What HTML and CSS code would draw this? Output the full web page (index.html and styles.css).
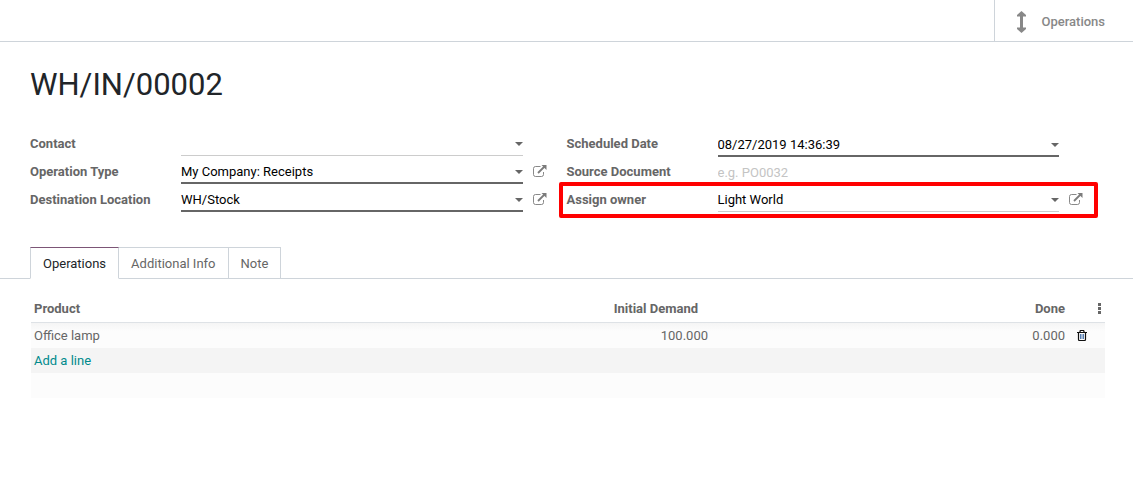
FILE: index.html
```html
<!DOCTYPE html>
<html lang="en">
<head>
<meta charset="utf-8">
<title>WH/IN/00002</title>
<link rel="stylesheet" href="styles.css">
</head>
<body>
<svg class="sprite" aria-hidden="true">
  <symbol id="external" viewBox="0 0 14 12">
    <path d="M7.500 1.500H2.500Q.5 1.500 .5 3.500V9.500Q.5 11.500 2.500 11.500H8.500Q10.500 11.500 10.500 9.500V7" fill="none" stroke="currentColor" stroke-opacity=".9"/>
    <path d="M5 8L11.500 1.500" fill="none" stroke="currentColor" stroke-width="1.800"/>
    <path d="M8.500 0H13.500V5Z" fill="currentColor"/>
  </symbol>
</svg>
<header class="topbar">
  <button class="stat" type="button">
    <svg class="stat-icon" viewBox="0 0 9 22" aria-hidden="true"><path d="M4.500 0L9 4V5.500H6V16.500H9V18L4.500 22L0 18V16.500H3V5.500H0V4Z" fill="currentColor"/></svg>
    <span>Operations</span>
  </button>
</header>
<main>
  <section class="sheet">
    <h1 class="title">WH/IN/00002</h1>
    <form class="groups">
      <div class="group">
        <div class="row">
          <label for="contact">Contact</label>
          <div class="field"><input id="contact" type="text"><span class="caret"></span></div>
        </div>
        <div class="row">
          <label for="type">Operation Type</label>
          <div class="field required"><input id="type" type="text" value="My Company: Receipts"><span class="caret"></span></div>
          <button class="open" type="button" aria-label="Open operation type"><svg><use href="#external"/></svg></button>
        </div>
        <div class="row">
          <label for="dest">Destination Location</label>
          <div class="field required"><input id="dest" type="text" value="WH/Stock"><span class="caret"></span></div>
          <button class="open" type="button" aria-label="Open location"><svg><use href="#external"/></svg></button>
        </div>
      </div>
      <div class="group">
        <div class="row">
          <label for="date">Scheduled Date</label>
          <div class="field required date"><input id="date" type="text" value="08/27/2019 14:36:39"><span class="caret"></span></div>
        </div>
        <div class="row">
          <label for="source">Source Document</label>
          <div class="field plain"><input id="source" type="text" placeholder="e.g. PO0032"></div>
        </div>
        <div class="row marked">
          <label for="owner">Assign owner</label>
          <div class="field"><input id="owner" type="text" value="Light World"><span class="caret"></span></div>
          <button class="open" type="button" aria-label="Open owner"><svg><use href="#external"/></svg></button>
        </div>
      </div>
    </form>
  </section>
  <nav class="tabs">
    <button class="tab active" type="button">Operations</button>
    <button class="tab" type="button">Additional Info</button>
    <button class="tab" type="button">Note</button>
  </nav>
  <section class="list">
    <table>
      <colgroup><col class="c-product"><col class="c-demand"><col class="c-done"><col class="c-action"></colgroup>
      <thead>
        <tr><th>Product</th><th class="num demand">Initial Demand</th><th class="num">Done</th>
        <th class="more"><button type="button" aria-label="Columns"><svg viewBox="0 0 3 11"><path d="M0 0H3V3H0ZM0 4H3V7H0ZM0 8H3V11H0Z" fill="currentColor"/></svg></button></th></tr>
      </thead>
      <tbody>
        <tr class="first"><td>Office lamp</td><td class="num">100.000</td><td class="num">0.000</td>
        <td class="trash"><button type="button" aria-label="Delete"><svg viewBox="0 0 10 11"><path d="M0 2.500H10M3 2.500V1.500Q3 .5 4 .5H6Q7 .5 7 1.500V2.500M1.500 2.500V9.500Q1.500 10.500 2.500 10.500H7.500Q8.500 10.500 8.500 9.500V2.500" fill="none" stroke="currentColor" stroke-width="1.200"/><path d="M3.500 4V9M5 4V9M6.500 4V9" fill="none" stroke="#2a5a9a" stroke-width=".8"/></svg></button></td></tr>
        <tr class="shade"><td colspan="4"><a href="#">Add a line</a></td></tr>
        <tr><td colspan="4"></td></tr>
      </tbody>
    </table>
  </section>
</main>
</body>
</html>
```
FILE: styles.css
```css
* { box-sizing: border-box; }
body {
  margin: 0;
  background: #fff;
  color: #666;
  font: 13px/20px Roboto, "Liberation Sans", sans-serif;
}
button, input { font: inherit; color: inherit; background: none; border: 0; padding: 0; margin: 0; }
.sprite { display: none; }
.topbar {
  display: flex;
  justify-content: flex-end;
  height: 42px;
  border-bottom: 1px solid #ced4da;
}
.stat {
  display: flex;
  align-items: center;
  gap: 15px;
  padding: 2px 28px 0 22px;
  border-left: 1px solid #ced4da;
  color: #888;
  font-weight: 500;
}
.stat-icon { width: 9px; height: 22px; }
.sheet { padding: 23px 30px 0 30px; }
.title {
  margin: 0 0 25px;
  color: #212529;
  font-size: 31px;
  line-height: 40px;
  font-weight: 400;
}
.groups { display: grid; grid-template-columns: 1fr 1fr; }
.row {
  display: grid;
  grid-template-columns: 151px 1fr 44px;
  height: 28px;
  position: relative;
}
.row label { padding-top: 4px; font-weight: 700; }
.field {
  display: flex;
  align-items: center;
  height: 26px;
  padding-top: 3px;
  border-bottom: 1px solid #ccc;
  color: #000;
}
.field input { flex: 1; min-width: 0; height: 20px; outline: 0; }
.field input::placeholder { color: #c4c4c4; }
.field.required { border-bottom: 2px solid #666; }
.field.date { height: 27px; padding-top: 5px; }
.field.plain { padding-top: 5px; border-bottom-color: transparent; }
.caret {
  border: 4px solid transparent;
  border-top-color: #666;
  border-bottom: 0;
}
.open { display: flex; align-items: center; height: 26px; padding-left: 10px; color: #7c7c7c; }
.open svg { width: 14px; height: 12px; }
.marked::after {
  content: "";
  position: absolute;
  inset: -4px 5px -4px -8px;
  border: 4px solid #f00;
  border-radius: 2px;
  pointer-events: none;
}
.tabs {
  display: flex;
  margin-top: 33px;
  padding-left: 30px;
  box-shadow: inset 0 -1px #ced4da;
}
.tab {
  height: 32px;
  padding: 2px 12px 0;
  border: 1px solid #ced4da;
  border-left-width: 0;
}
.tab.active {
  border-left-width: 1px;
  border-top-color: #7c5576;
  border-bottom-color: #fff;
  background: #fff;
  color: #212529;
}
.list { padding: 16px 28px 0 31px; }
table { width: 100%; border-collapse: separate; border-spacing: 0; table-layout: fixed; }
.c-demand { width: 19%; }
.c-done { width: 357px; }
.c-action { width: 37px; }
th, td { height: 25px; padding: 0 3px; text-align: left; }
th { height: 28px; font-weight: 700; border-bottom: 1px solid #dee2e6; }
.num { text-align: right; }
th.demand { padding-right: 13px; }
tbody tr { background: #fcfcfc; }
tbody .first { background: linear-gradient(#f5f5f5, #fcfcfc 8px); }
tbody .shade { background: #f4f4f4; }
a { color: #008a8c; text-decoration: none; }
th button, td button { display: block; }
.more button { margin-left: auto; }
th.more { padding-right: 4px; }
.more svg { display: block; width: 3px; height: 11px; }
.trash { padding-left: 9px; color: #111; }
.trash svg { display: block; width: 10px; height: 11px; }
```
